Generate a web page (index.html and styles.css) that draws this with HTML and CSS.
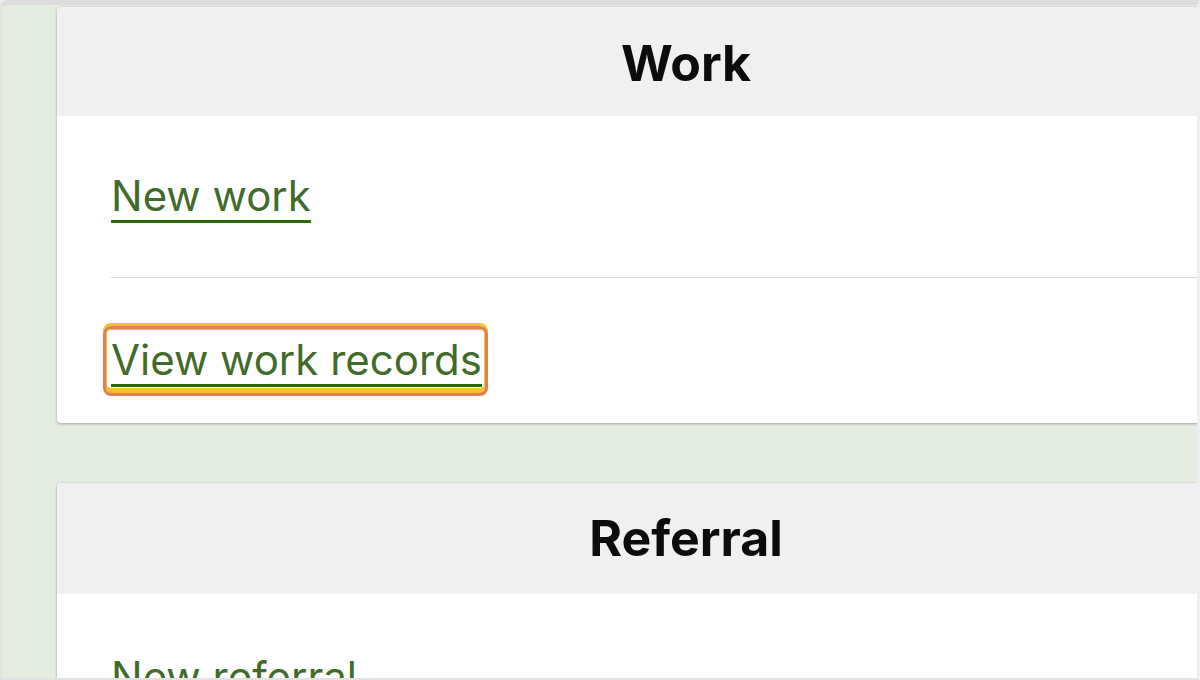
FILE: index.html
```html
<!DOCTYPE html>
<html lang="en">
<head>
<meta charset="utf-8">
<title>Work</title>
<link rel="stylesheet" href="styles.css">
</head>
<body>
<div class="frame">
  <div class="page">
    <section class="card">
      <header class="card-header"><h2 class="card-title">Work</h2></header>
      <div class="card-body">
        <div class="item item-first"><a class="link" href="#">New work</a></div>
        <div class="item item-last"><a class="link link-focus" href="#">View work records</a></div>
      </div>
    </section>
    <section class="card card-second">
      <header class="card-header card-header-tall"><h2 class="card-title">Referral</h2></header>
      <div class="card-body card-body-second">
        <div class="item item-first"><a class="link" href="#">New referral</a></div>
      </div>
    </section>
  </div>
</div>
</body>
</html>
```
FILE: styles.css
```css
html, body {
  margin: 0;
  padding: 0;
  width: 1200px;
  height: 680px;
  overflow: hidden;
  background: #eeeef1;
  font-family: Inter, "Noto Sans", sans-serif;
}

.frame {
  box-sizing: border-box;
  width: 1200px;
  height: 680px;
  border-top: 5px solid #dcdcdc;
  border-left: 2px solid #e2e2e2;
  border-right: 3px solid #efeff2;
  border-bottom: 2px solid #e2e2e2;
  border-top-left-radius: 8px;
  background: #e5ece2;
  overflow: hidden;
}

.page {
  padding: 2px 0 0 55px;
  display: flex;
  flex-direction: column;
  gap: 60px;
}

.card {
  width: 1258px;
  flex-shrink: 0;
  background: #ffffff;
  border-radius: 4px;
  box-shadow: 0 1px 3px rgba(0, 0, 0, 0.28), 0 0 1px rgba(0, 0, 0, 0.2);
  overflow: hidden;
}

.card-header {
  height: 109px;
  box-sizing: border-box;
  padding-top: 2px;
  background: #f0f0f0;
  display: flex;
  align-items: center;
  justify-content: center;
}

.card-header-tall {
  height: 111px;
  padding-top: 0;
}

.card-title {
  margin: 0;
  font-size: 50px;
  line-height: 1;
  font-weight: 700;
  color: #0b0c0c;
}

.card-body {
  padding: 55px 0 37px 54px;
}

.card-body-second {
  padding-top: 58px;
}

.item {
  font-size: 42px;
  line-height: 1.2;
}

.item-first {
  padding-bottom: 56px;
  border-bottom: 1px solid #d9d9d9;
}

.item-last {
  padding-top: 57px;
}

.link {
  position: relative;
  display: inline-block;
  color: #426b2b;
  text-decoration: underline;
  text-decoration-color: #2b6a0d;
  text-decoration-thickness: 3px;
  text-underline-offset: 9px;
}

.link-focus::after {
  content: "";
  position: absolute;
  top: -9px;
  bottom: -10px;
  left: -8px;
  right: -6px;
  border: 3px solid #e57e4c;
  border-radius: 8px;
  box-shadow: 0 -3px 0 #f1c232, inset 0 -5px 0 #f1c232, inset 0 0 0 1px #f1c232;
}
```
